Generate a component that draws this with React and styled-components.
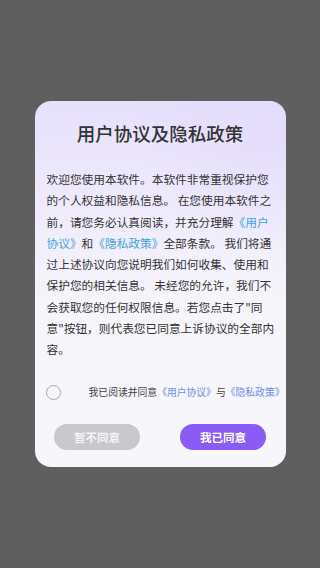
import React, { useState } from "react";
import styled, { createGlobalStyle } from "styled-components";

const GlobalStyle = createGlobalStyle`
    html, body {
        margin: 0;
        padding: 0;
        background: #5f5f5f;
    }
    body {
        font-family: "Noto Sans CJK SC", "Noto Sans", sans-serif;
    }
`

const Overlay = styled.div`
    min-height: 100vh;
    display: flex;
    align-items: center;
    justify-content: center;
    background: #5f5f5f;
`

const Card = styled.div`
    width: 251px;
    height: 366px;
    box-sizing: border-box;
    border-radius: 16px;
    padding: 20px 0 17px;
    display: flex;
    flex-direction: column;
    background:
        radial-gradient(circle at 92% 4%, rgba(228, 220, 252, 0.9) 0%, rgba(228, 220, 252, 0) 32%),
        linear-gradient(180deg, #e6e0fc 0%, #efebfb 30%, #f6f5fa 55%, #f7f6fa 100%);
    overflow: hidden;
`

const Title = styled.h1`
    margin: 0;
    font-size: 18.5px;
    line-height: 24px;
    font-weight: 500;
    color: #333;
    text-align: center;
`

const Body = styled.p`
    margin: 23px 0 0;
    padding: 0 10px 0 12px;
    font-size: 11.7px;
    line-height: 21.3px;
    color: #333;
`

const Link = styled.span`
    color: ${props => props.color || "#3da5d9"};
`

const AgreeRow = styled.label`
    margin-top: 25px;
    padding: 0 1px 0 11px;
    display: flex;
    align-items: center;
    justify-content: space-between;
    cursor: pointer;
`

const Circle = styled.span`
    width: 15px;
    height: 15px;
    box-sizing: border-box;
    border-radius: 50%;
    border: 1px solid ${props => props.checked ? "#8a5cf5" : "#a8a8a8"};
    background: ${props => props.checked ? "#8a5cf5" : "transparent"};
`

const AgreeText = styled.span`
    font-size: 9.8px;
    line-height: 14px;
    color: #444;
`

const Buttons = styled.div`
    margin-top: auto;
    display: flex;
    justify-content: center;
    gap: 40px;
`

const Button = styled.button`
    width: 86px;
    height: 26px;
    border: none;
    border-radius: 13px;
    background: ${props => props.primary ? "#8a5cf5" : "#c9c8cc"};
    color: ${props => props.primary ? "#fff" : "#f4f4f6"};
    font-family: inherit;
    font-size: 11.5px;
    font-weight: 700;
    padding: 0;
    cursor: pointer;
`

export default function App() {
    const [checked, setChecked] = useState(false)

    return (
        <>
            <GlobalStyle />
            <Overlay>
                <Card>
                    <Title>用户协议及隐私政策</Title>
                    <Body>
                        欢迎您使用本软件。本软件非常重视保护您<br />
                        的个人权益和隐私信息。 在您使用本软件之<br />
                        前，请您务必认真阅读，并充分理解<Link>《用户<br />
                        协议》</Link>和<Link>《隐私政策》</Link>全部条款。 我们将通<br />
                        过上述协议向您说明我们如何收集、使用和<br />
                        保护您的相关信息。 未经您的允许，我们不<br />
                        会获取您的任何权限信息。若您点击了"同<br />
                        意"按钮，则代表您已同意上诉协议的全部内<br />
                        容。
                    </Body>
                    <AgreeRow onClick={() => setChecked(!checked)}>
                        <Circle checked={checked} />
                        <AgreeText>
                            我已阅读并同意<Link color="#6e8fe8">《用户协议》</Link>与<Link color="#6e8fe8">《隐私政策》</Link>
                        </AgreeText>
                    </AgreeRow>
                    <Buttons>
                        <Button>暂不同意</Button>
                        <Button primary>我已同意</Button>
                    </Buttons>
                </Card>
            </Overlay>
        </>
    )
}
